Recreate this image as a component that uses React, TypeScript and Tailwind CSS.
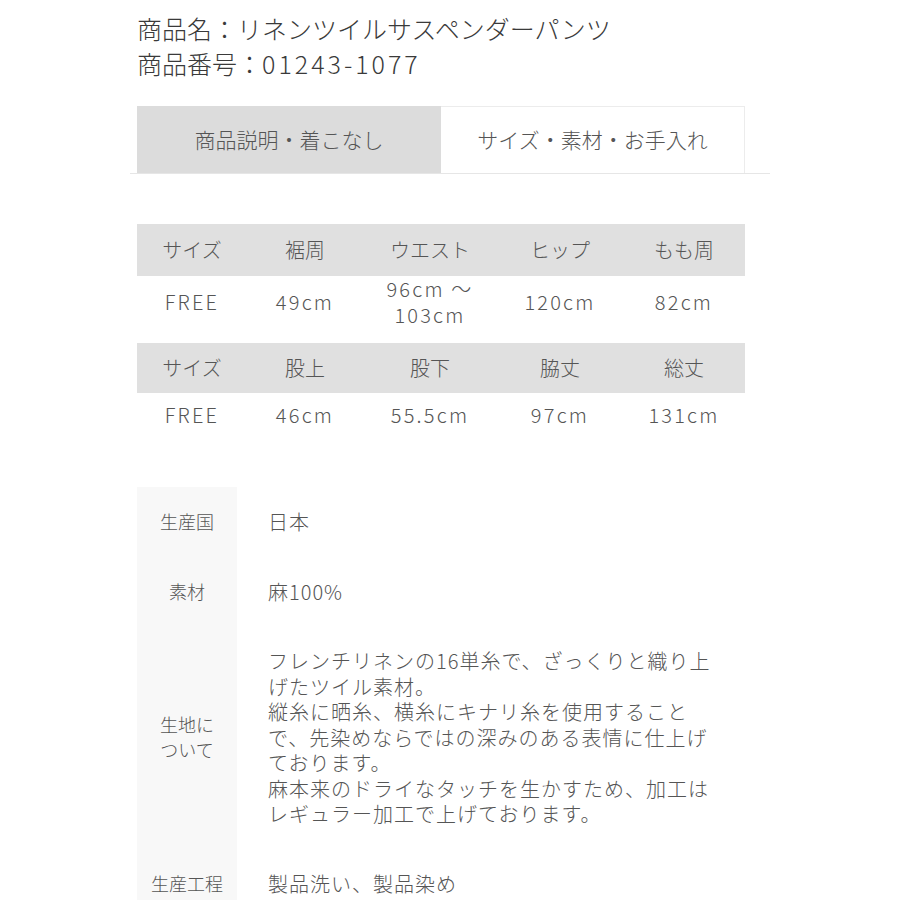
import React from "react";

const sizeCols = "grid grid-cols-[110px_116px_134px_126px_122px]";

const table1 = {
  head: ["サイズ", "裾周", "ウエスト", "ヒップ", "もも周"],
  row: ["FREE", "49cm", "96cm ～\n103cm", "120cm", "82cm"],
};

const table2 = {
  head: ["サイズ", "股上", "股下", "脇丈", "総丈"],
  row: ["FREE", "46cm", "55.5cm", "97cm", "131cm"],
};

const specs = [
  { label: ["生産国"], value: ["日本"] },
  { label: ["素材"], value: ["麻100%"] },
  {
    label: ["生地に", "ついて"],
    value: [
      "フレンチリネンの16単糸で、ざっくりと織り上",
      "げたツイル素材。",
      "縦糸に晒糸、横糸にキナリ糸を使用すること",
      "で、先染めならではの深みのある表情に仕上げ",
      "ております。",
      "麻本来のドライなタッチを生かすため、加工は",
      "レギュラー加工で上げております。",
    ],
  },
  { label: ["生産工程"], value: ["製品洗い、製品染め"] },
];

export default function App() {
  return (
    <div className="w-[900px] h-[900px] overflow-hidden bg-white font-light text-[#555] font-['Noto_Sans_CJK_JP','Noto_Sans',sans-serif]">
      <div className="pl-[137px] pt-[11px] text-[25px] leading-[35px] text-[#3a3a3a]">
        <div>商品名：リネンツイルサスペンダーパンツ</div>
        <div>
          商品番号：<span className="tracking-[3px]">01243-1077</span>
        </div>
      </div>

      <div className="ml-[130px] mt-[25px] w-[640px] pl-[7px] flex border-b border-[#e6e6e6]">
        <div className="w-[304px] h-[67px] bg-[#dcdcdc] flex items-center justify-center text-[21px]">
          商品説明・着こなし
        </div>
        <div className="w-[304px] h-[67px] bg-white border-t border-r border-[#ececec] flex items-center justify-center text-[21px]">
          サイズ・素材・お手入れ
        </div>
      </div>

      <div className="ml-[137px] w-[608px] mt-[50px] text-[20px]">
        <div className={`${sizeCols} h-[52px] bg-[#e0e0e0] items-center text-center`}>
          {table1.head.map((h) => (
            <div key={h}>{h}</div>
          ))}
        </div>
        <div className={`${sizeCols} h-[52px] items-center text-center leading-[26px] tracking-[2.2px]`}>
          {table1.row.map((c, i) => (
            <div key={i} className="whitespace-pre-line">{c}</div>
          ))}
        </div>

        <div className={`${sizeCols} mt-[15px] h-[50px] bg-[#e0e0e0] items-center text-center`}>
          {table2.head.map((h, i) => (
            <div key={i}>{h}</div>
          ))}
        </div>
        <div className={`${sizeCols} h-[44px] items-center text-center tracking-[2.2px]`}>
          {table2.row.map((c, i) => (
            <div key={i}>{c}</div>
          ))}
        </div>
      </div>

      <div className="ml-[137px] w-[608px] mt-[50px]">
        {specs.map((s, i) => (
          <div key={i} className="flex">
            <div className="w-[100px] shrink-0 bg-[#f8f8f8] flex flex-col items-center justify-center text-[18px] leading-[25px]">
              {s.label.map((l) => (
                <div key={l}>{l}</div>
              ))}
            </div>
            <div className="pl-[31px] py-[22px] text-[20px] leading-[25.5px] tracking-[1px] whitespace-nowrap">
              {s.value.map((v) => (
                <div key={v}>{v}</div>
              ))}
            </div>
          </div>
        ))}
      </div>
    </div>
  );
}
